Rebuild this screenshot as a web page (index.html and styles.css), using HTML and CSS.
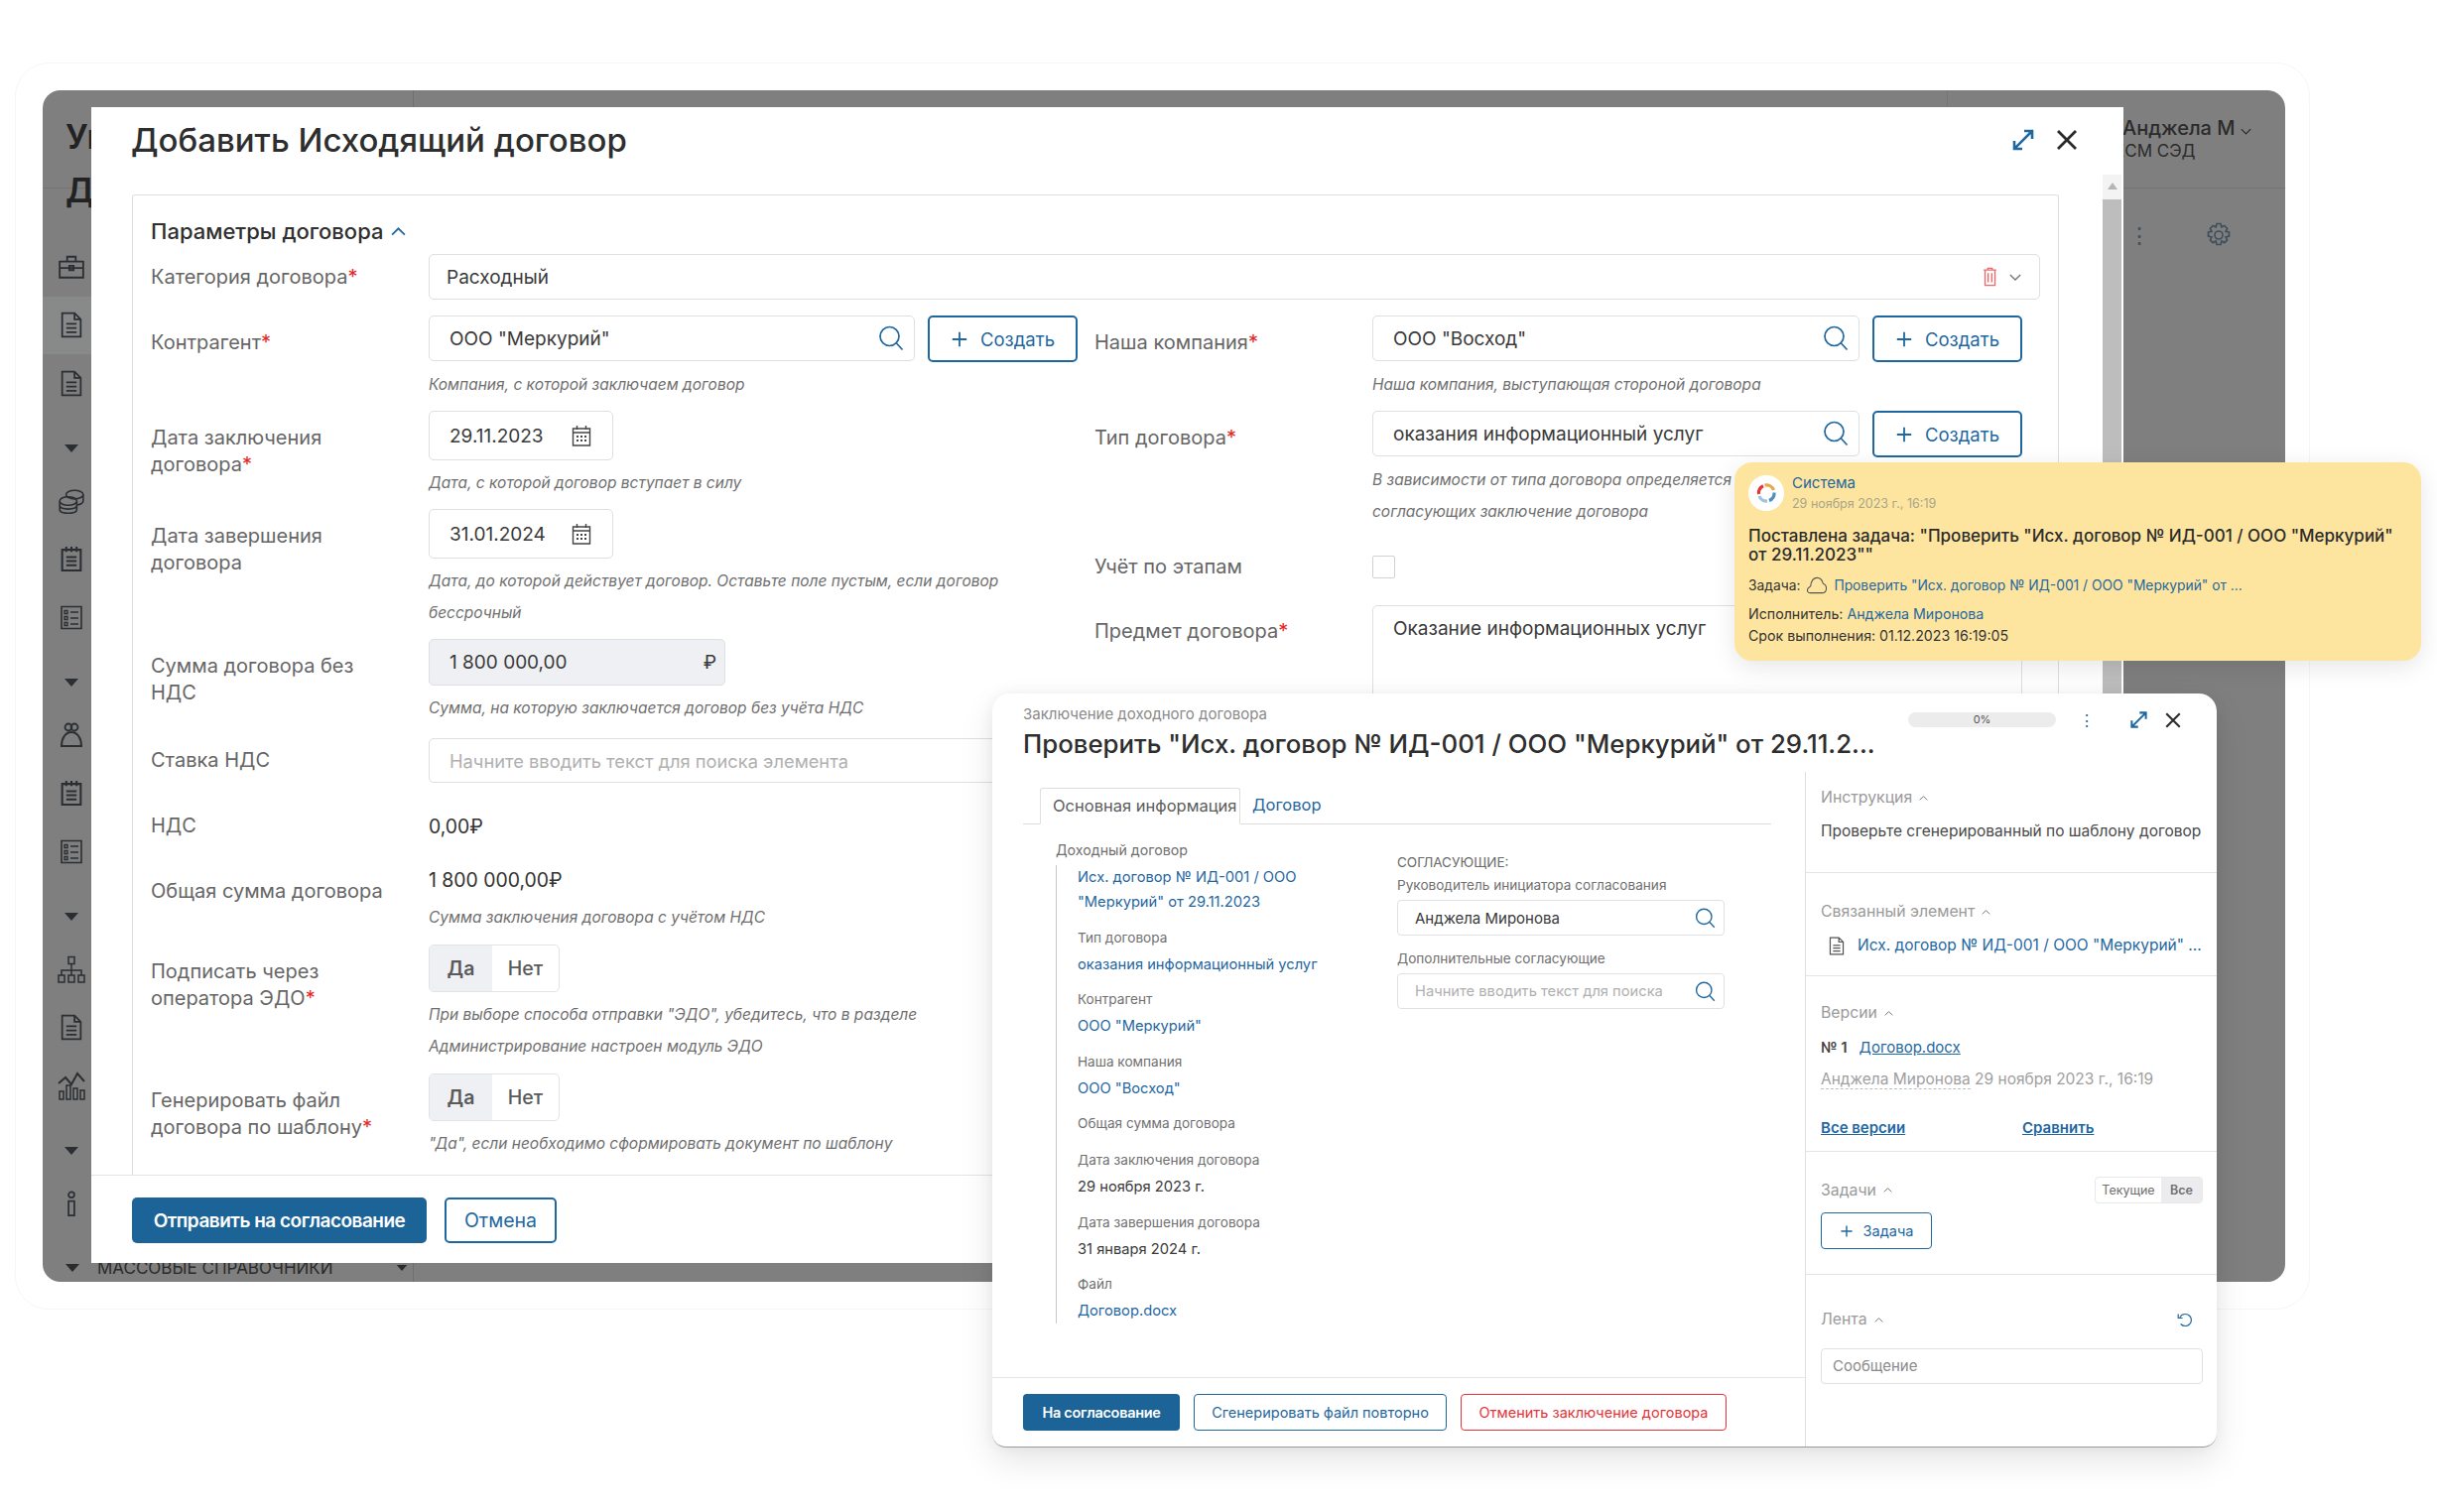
FILE: index.html
```html
<!DOCTYPE html>
<html lang="ru">
<head>
<meta charset="utf-8">
<title>Исходящий договор</title>
<link rel="stylesheet" href="styles.css">
</head>
<body>
<svg class="defs" width="0" height="0">
  <symbol id="i-search" viewBox="0 0 26 26"><circle cx="11.5" cy="11" r="9.5" fill="none" stroke="currentColor" stroke-width="1.7"/><path d="M18.5 18l6 6.5" fill="none" stroke="currentColor" stroke-width="1.7"/></symbol>
  <symbol id="i-plus" viewBox="0 0 20 20"><path d="M10 2v16M2 10h16" fill="none" stroke="currentColor" stroke-width="2"/></symbol>
  <symbol id="i-cal" viewBox="0 0 20 22"><path d="M1.5 4h17v17h-17zM1.5 8h17M5.500 1v4M14.500 1v4" fill="none" stroke="currentColor" stroke-width="1.400"/><path d="M5 11h2v2H5zM9 11h2v2H9zM13 11h2v2h-2zM5 15h2v2H5zM9 15h2v2H9zM13 15h2v2h-2z" fill="currentColor"/></symbol>
  <symbol id="i-expand" viewBox="0 0 24 24"><path d="M3 21L21 3M13 3h8v8M3 13v8h8" fill="none" stroke="currentColor" stroke-width="2.600"/></symbol>
  <symbol id="i-close" viewBox="0 0 24 24"><path d="M3 3l18 18M21 3L3 21" fill="none" stroke="currentColor" stroke-width="2.800"/></symbol>
  <symbol id="i-chev" viewBox="0 0 14 8"><path d="M1 7l6-6 6 6" fill="none" stroke="currentColor" stroke-width="1.600"/></symbol>
  <symbol id="i-down" viewBox="0 0 14 8"><path d="M1 1l6 6 6-6" fill="none" stroke="currentColor" stroke-width="1.600"/></symbol>
  <symbol id="i-arrow" viewBox="0 0 16 10"><path d="M1 1h14L8 9z" fill="currentColor"/></symbol>
  <symbol id="i-doc" viewBox="0 0 22 26"><path d="M2 1.500h12l6 6v17H2zM14 1.500v6h6M6 12h10M6 16h10M6 20h10" fill="none" stroke="currentColor" stroke-width="1.700"/></symbol>
  <symbol id="i-case" viewBox="0 0 26 24"><path d="M2 7h22v15H2zM9 7V2.500h8V7M2 13h22M11 11h4v4h-4z" fill="none" stroke="currentColor" stroke-width="1.700"/></symbol>
  <symbol id="i-coins" viewBox="0 0 26 24"><ellipse cx="16" cy="6" rx="8" ry="4" fill="none" stroke="currentColor" stroke-width="1.500"/><path d="M24 6v6c0 2-3 3.500-6 3.500M2 12c0-2 3-4 8-4s8 2 8 4-3 4-8 4-8-2-8-4zM2 12v8c0 2 3 3.500 8 3.500s8-1.500 8-3.500v-8M2 16c0 2 3 3.500 8 3.500s8-1.500 8-3.500" fill="none" stroke="currentColor" stroke-width="1.500"/></symbol>
  <symbol id="i-note" viewBox="0 0 22 26"><path d="M2 4h18v20H2zM6 1v5M11 1v5M16 1v5M6 11h10M6 15h10M6 19h10" fill="none" stroke="currentColor" stroke-width="2"/></symbol>
  <symbol id="i-list" viewBox="0 0 24 26"><path d="M2 2h20v22H2z" fill="none" stroke="currentColor" stroke-width="1.600"/><path d="M5 6h3v3H5zM5 12h3v3H5zM5 18h3v3H5zM11 7.500h8M11 13.500h8M11 19.500h8" fill="none" stroke="currentColor" stroke-width="1.300"/></symbol>
  <symbol id="i-person" viewBox="0 0 26 26"><circle cx="10" cy="5" r="3.500" fill="none" stroke="currentColor" stroke-width="1.800"/><circle cx="16" cy="5" r="3.500" fill="none" stroke="currentColor" stroke-width="1.800"/><path d="M3 24c0-8 4-14 10-14s10 6 10 14z" fill="none" stroke="currentColor" stroke-width="2"/></symbol>
  <symbol id="i-tree" viewBox="0 0 30 28"><path d="M12 1.500h6v7h-6zM2 20h6v7H2zM12 20h6v7h-6zM22 20h6v7h-6zM15 8.500V20M5 20v-5h20v5" fill="none" stroke="currentColor" stroke-width="1.500"/></symbol>
  <symbol id="i-chart" viewBox="0 0 30 30"><path d="M2 13l7-6 6 7 6-11 7 8" fill="none" stroke="currentColor" stroke-width="2"/><path d="M3 21h4v8H3zM10 15h4v14h-4zM17 18h4v11h-4zM24 20h4v9h-4z" fill="none" stroke="currentColor" stroke-width="1.500"/></symbol>
  <symbol id="i-info" viewBox="0 0 14 28"><circle cx="7" cy="4.500" r="3" fill="none" stroke="currentColor" stroke-width="1.800"/><path d="M4 11h6v15H4z" fill="none" stroke="currentColor" stroke-width="1.800"/></symbol>
  <symbol id="i-trash" viewBox="0 0 16 22"><path d="M5.500 3V1.500h5V3M1 3.500h14M2.500 3.500v17h11v-17M6 7v10M10 7v10" fill="none" stroke="currentColor" stroke-width="1.500"/></symbol>
  <symbol id="i-gear" viewBox="0 0 26 26"><circle cx="13" cy="13" r="4" fill="none" stroke="currentColor" stroke-width="1.700"/><path d="M11 1.500h4l.8 3.300 3-1.300 2.800 2.800-1.500 3 3.400.7v4l-3.400.8 1.500 3-2.800 2.800-3-1.500-.8 3.400h-4l-.8-3.400-3 1.500-2.800-2.800 1.500-3-3.400-.8v-4l3.400-.7-1.500-3 2.800-2.800 3 1.300z" fill="none" stroke="currentColor" stroke-width="1.700"/></symbol>
  <symbol id="i-cloud" viewBox="0 0 24 20"><path d="M6 18.500H4.500C2 18.500 1 16.500 1.500 14.500 2 12.500 4 12 5 11 5.500 6 8 1.500 12.500 1.500 16 1.500 18 4.500 19 8c2.500 1 4 3.500 3.500 6.500-.4 2.500-2 4-4.500 4z" fill="none" stroke="currentColor" stroke-width="1.200"/></symbol>
  <symbol id="i-refresh" viewBox="0 0 20 18"><path d="M3.500 5.500C5 3 7.500 1.500 10.500 1.500c4 0 7.500 3.300 7.500 7.500s-3.500 7.500-7.500 7.500c-2.500 0-4.500-1-6-2.500" fill="none" stroke="currentColor" stroke-width="1.500"/><path d="M1.500 1.500v5h5.500" fill="none" stroke="currentColor" stroke-width="1.500"/></symbol>
  <symbol id="i-logo" viewBox="0 0 24 24"><path d="M4.500 13A8 8 0 0 1 9 4.700" fill="none" stroke="#e5343a" stroke-width="3.200"/><path d="M10.500 4A8 8 0 0 1 19.500 9" fill="none" stroke="#e9a74d" stroke-width="3.200"/><path d="M20 11.500A8 8 0 0 1 15 19.500" fill="none" stroke="#4f8fc4" stroke-width="3.200"/><path d="M13 20A8 8 0 0 1 5 15" fill="none" stroke="#9fc3de" stroke-width="3.200"/></symbol>
</svg>

<main class="stage">
  <div class="frame"></div>

  <section class="app">
    <div class="app-top">
      <div class="app-top-side"></div>
      <div class="app-top-mid">
        <div class="page-title">Уг<br>Дс</div>
      </div>
      <div class="app-user">
        <div class="app-user-name">Анджела М <svg class="ic-10"><use href="#i-down"/></svg></div>
        <div class="app-user-role">ЕСМ СЭД</div>
      </div>
    </div>
    <div class="app-tools">
      <span class="tool-dots">⋮</span>
      <svg class="ic-26"><use href="#i-gear"/></svg>
    </div>
    <nav class="rail">
      <div class="rail-item"><svg class="ic-26"><use href="#i-case"/></svg></div>
      <div class="rail-item rail-active"><svg class="ic-24"><use href="#i-doc"/></svg></div>
      <div class="rail-item"><svg class="ic-24"><use href="#i-doc"/></svg></div>
      <div class="rail-arrow"><svg class="ic-arrow"><use href="#i-arrow"/></svg></div>
      <div class="rail-item"><svg class="ic-26"><use href="#i-coins"/></svg></div>
      <div class="rail-item"><svg class="ic-24"><use href="#i-note"/></svg></div>
      <div class="rail-item"><svg class="ic-24"><use href="#i-list"/></svg></div>
      <div class="rail-arrow"><svg class="ic-arrow"><use href="#i-arrow"/></svg></div>
      <div class="rail-item"><svg class="ic-26"><use href="#i-person"/></svg></div>
      <div class="rail-item"><svg class="ic-24"><use href="#i-note"/></svg></div>
      <div class="rail-item"><svg class="ic-24"><use href="#i-list"/></svg></div>
      <div class="rail-arrow"><svg class="ic-arrow"><use href="#i-arrow"/></svg></div>
      <div class="rail-item"><svg class="ic-30"><use href="#i-tree"/></svg></div>
      <div class="rail-item"><svg class="ic-24"><use href="#i-doc"/></svg></div>
      <div class="rail-item"><svg class="ic-30"><use href="#i-chart"/></svg></div>
      <div class="rail-arrow"><svg class="ic-arrow"><use href="#i-arrow"/></svg></div>
      <div class="rail-item"><svg class="ic-24"><use href="#i-info"/></svg></div>
    </nav>
    <div class="rail-foot">
      <svg class="ic-arrow"><use href="#i-arrow"/></svg>
      <span class="rail-foot-text">МАССОВЫЕ СПРАВОЧНИКИ</span>
      <svg class="ic-arrow-s"><use href="#i-arrow"/></svg>
    </div>
  </section>

  <section class="modal">
    <header class="modal-head">
      <h1 class="modal-title">Добавить Исходящий договор</h1>
      <div class="modal-actions">
        <svg class="ic-expand"><use href="#i-expand"/></svg>
        <svg class="ic-close"><use href="#i-close"/></svg>
      </div>
    </header>
    <div class="modal-body">
      <div class="card">
        <div class="card-title">Параметры договора <svg class="ic-chev"><use href="#i-chev"/></svg></div>
        <div class="field field-cat">
          <label class="label label-cat">Категория договора<em>*</em></label>
          <div class="input">
            <span class="grow">Расходный</span>
            <svg class="ic-trash"><use href="#i-trash"/></svg>
            <svg class="ic-selchev"><use href="#i-down"/></svg>
          </div>
        </div>
        <div class="columns">
          <div class="col">
            <div class="field">
              <label class="label">Контрагент<em>*</em></label>
              <div>
                <div class="input-row">
                  <div class="input input-pad"><span class="grow">ООО "Меркурий"</span><svg class="ic-search"><use href="#i-search"/></svg></div>
                  <button class="btn-add"><svg class="ic-plus"><use href="#i-plus"/></svg>Создать</button>
                </div>
                <p class="hint">Компания, с которой заключаем договор</p>
              </div>
            </div>
            <div class="field">
              <label class="label">Дата заключения договора<em>*</em></label>
              <div>
                <div class="input input-pad input-date"><span class="grow">29.11.2023</span><svg class="ic-cal"><use href="#i-cal"/></svg></div>
                <p class="hint">Дата, с которой договор вступает в силу</p>
              </div>
            </div>
            <div class="field">
              <label class="label">Дата завершения договора</label>
              <div>
                <div class="input input-pad input-date"><span class="grow">31.01.2024</span><svg class="ic-cal"><use href="#i-cal"/></svg></div>
                <p class="hint">Дата, до которой действует договор. Оставьте поле пустым, если договор<br>бессрочный</p>
              </div>
            </div>
            <div class="field">
              <label class="label">Сумма договора без НДС</label>
              <div>
                <div class="input input-pad input-sum"><span class="grow">1 800 000,00</span><span>₽</span></div>
                <p class="hint">Сумма, на которую заключается договор без учёта НДС</p>
              </div>
            </div>
            <div class="field field-rate">
              <label class="label label-rate">Ставка НДС</label>
              <div class="input input-pad input-ph">Начните вводить текст для поиска элемента</div>
            </div>
            <div class="field field-vat">
              <label class="label label-vat">НДС</label>
              <div class="value">0,00₽</div>
            </div>
            <div class="field field-total">
              <label class="label">Общая сумма договора</label>
              <div>
                <div class="value">1 800 000,00₽</div>
                <p class="hint hint-tight">Сумма заключения договора с учётом НДС</p>
              </div>
            </div>
            <div class="field field-toggle">
              <label class="label">Подписать через оператора ЭДО<em>*</em></label>
              <div>
                <div class="toggle"><span class="toggle-on">Да</span><span class="toggle-off">Нет</span></div>
                <p class="hint">При выборе способа отправки "ЭДО", убедитесь, что в разделе<br>Администрирование настроен модуль ЭДО</p>
              </div>
            </div>
            <div class="field field-toggle">
              <label class="label">Генерировать файл договора по шаблону<em>*</em></label>
              <div>
                <div class="toggle"><span class="toggle-on">Да</span><span class="toggle-off">Нет</span></div>
                <p class="hint">"Да", если необходимо сформировать документ по шаблону</p>
              </div>
            </div>
          </div>
          <div class="col">
            <div class="field">
              <label class="label">Наша компания<em>*</em></label>
              <div>
                <div class="input-row">
                  <div class="input input-pad"><span class="grow">ООО "Восход"</span><svg class="ic-search"><use href="#i-search"/></svg></div>
                  <button class="btn-add"><svg class="ic-plus"><use href="#i-plus"/></svg>Создать</button>
                </div>
                <p class="hint">Наша компания, выступающая стороной договора</p>
              </div>
            </div>
            <div class="field">
              <label class="label">Тип договора<em>*</em></label>
              <div>
                <div class="input-row">
                  <div class="input input-pad"><span class="grow">оказания информационный услуг</span><svg class="ic-search"><use href="#i-search"/></svg></div>
                  <button class="btn-add"><svg class="ic-plus"><use href="#i-plus"/></svg>Создать</button>
                </div>
                <p class="hint">В зависимости от типа договора определяется состав<br>согласующих заключение договора</p>
              </div>
            </div>
            <div class="field field-check">
              <label class="label">Учёт по этапам</label>
              <div><div class="checkbox"></div></div>
            </div>
            <div class="field">
              <label class="label label-subject">Предмет договора<em>*</em></label>
              <div class="textarea">Оказание информационных услуг</div>
            </div>
          </div>
        </div>
      </div>
    </div>
    <footer class="modal-foot">
      <button class="btn-primary">Отправить на согласование</button>
      <button class="btn-outline">Отмена</button>
    </footer>
    <div class="scrollbar"><span class="scroll-up"></span><span class="scroll-thumb"></span></div>
  </section>

  <section class="task">
    <header class="task-head">
      <div class="task-head-main">
        <div class="task-crumb">Заключение доходного договора</div>
        <h2 class="task-title">Проверить "Исх. договор № ИД-001 / ООО "Меркурий" от 29.11.2...</h2>
      </div>
      <div class="task-tools">
        <div class="progress">0%</div>
        <span class="task-dots">⋮</span>
        <svg class="ic-expand-s"><use href="#i-expand"/></svg>
        <svg class="ic-close-s"><use href="#i-close"/></svg>
      </div>
    </header>
    <div class="task-body">
      <div class="task-main">
        <div class="tabs">
          <span class="tab tab-active">Основная информация</span>
          <span class="tab tab-link">Договор</span>
        </div>
        <div class="task-content">
          <div class="info">
            <div class="info-head">Доходный договор</div>
            <div class="info-list">
              <div class="info-item"><a class="link">Исх. договор № ИД-001 / ООО<br>"Меркурий" от 29.11.2023</a></div>
              <div class="info-item"><div class="info-label">Тип договора</div><a class="link info-val">оказания информационный услуг</a></div>
              <div class="info-item"><div class="info-label">Контрагент</div><a class="link info-val">ООО "Меркурий"</a></div>
              <div class="info-item"><div class="info-label">Наша компания</div><a class="link info-val">ООО "Восход"</a></div>
              <div class="info-item info-empty"><div class="info-label">Общая сумма договора</div></div>
              <div class="info-item"><div class="info-label">Дата заключения договора</div><div class="info-val">29 ноября 2023 г.</div></div>
              <div class="info-item"><div class="info-label">Дата завершения договора</div><div class="info-val">31 января 2024 г.</div></div>
              <div class="info-item info-last"><div class="info-label">Файл</div><a class="link info-val">Договор.docx</a></div>
            </div>
          </div>
          <div class="approvers">
            <div class="appr-head">СОГЛАСУЮЩИЕ:</div>
            <div class="info-label">Руководитель инициатора согласования</div>
            <div class="mini-input"><span class="grow">Анджела Миронова</span><svg class="ic-search-s"><use href="#i-search"/></svg></div>
            <div class="info-label appr-label">Дополнительные согласующие</div>
            <div class="mini-input mini-ph"><span class="grow">Начните вводить текст для поиска</span><svg class="ic-search-s"><use href="#i-search"/></svg></div>
          </div>
        </div>
        <footer class="task-foot">
          <button class="tbtn tbtn-primary">На согласование</button>
          <button class="tbtn tbtn-outline">Сгенерировать файл повторно</button>
          <button class="tbtn tbtn-danger">Отменить заключение договора</button>
        </footer>
      </div>
      <aside class="task-side">
        <div class="side-sec sec-instr">
          <div class="side-title">Инструкция <svg class="ic-chev-s"><use href="#i-chev"/></svg></div>
          <p class="side-text">Проверьте сгенерированный по шаблону договор</p>
        </div>
        <div class="side-sec sec-link">
          <div class="side-title">Связанный элемент <svg class="ic-chev-s"><use href="#i-chev"/></svg></div>
          <div class="side-linked"><svg class="ic-doc-s"><use href="#i-doc"/></svg><a class="link">Исх. договор № ИД-001 / ООО "Меркурий" ...</a></div>
        </div>
        <div class="side-sec sec-ver">
          <div class="side-title">Версии <svg class="ic-chev-s"><use href="#i-chev"/></svg></div>
          <div class="ver-row"><b class="ver-num">№ 1</b><a class="link link-u">Договор.docx</a></div>
          <div class="ver-meta"><span class="ver-author">Анджела Миронова</span> 29 ноября 2023 г., 16:19</div>
          <div class="ver-links"><a class="link link-u link-b ver-all">Все версии</a><a class="link link-u link-b">Сравнить</a></div>
        </div>
        <div class="side-sec sec-tasks">
          <div class="side-row">
            <div class="side-title">Задачи <svg class="ic-chev-s"><use href="#i-chev"/></svg></div>
            <div class="mini-toggle"><span class="mt-off">Текущие</span><span class="mt-on">Все</span></div>
          </div>
          <button class="btn-task"><svg class="ic-plus-s"><use href="#i-plus"/></svg>Задача</button>
        </div>
        <div class="side-sec sec-feed">
          <div class="side-row side-row-feed">
            <div class="side-title">Лента <svg class="ic-chev-s"><use href="#i-chev"/></svg></div>
            <svg class="ic-refresh"><use href="#i-refresh"/></svg>
          </div>
          <div class="feed-input">Сообщение</div>
        </div>
      </aside>
    </div>
  </section>

  <aside class="toast">
    <div class="toast-head">
      <div class="toast-avatar"><svg class="ic-logo"><use href="#i-logo"/></svg></div>
      <div>
        <a class="link toast-from">Система</a>
        <div class="toast-date">29 ноября 2023 г., 16:19</div>
      </div>
    </div>
    <div class="toast-title">Поставлена задача: "Проверить "Исх. договор № ИД-001 / ООО "Меркурий" от 29.11.2023""</div>
    <div class="toast-line toast-task">Задача: <svg class="ic-cloud"><use href="#i-cloud"/></svg> <a class="link">Проверить "Исх. договор № ИД-001 / ООО "Меркурий" от ...</a></div>
    <div class="toast-line toast-exec">Исполнитель: <a class="link">Анджела Миронова</a></div>
    <div class="toast-line toast-due">Срок выполнения: 01.12.2023 16:19:05</div>
  </aside>
</main>
</body>
</html>
```

FILE: styles.css
```css
* { box-sizing: border-box; }
html, body { margin: 0; padding: 0; background: #fff; }
body { font-family: Inter, "Noto Sans", sans-serif; color: #2f2f2f; }
.defs { position: absolute; }
svg { flex: none; }
p, h1, h2 { margin: 0; font-weight: 500; }
p { font-weight: 400; }
em { color: #e32626; font-style: normal; }
button { font-family: inherit; cursor: pointer; }
.grow { flex: 1; min-width: 0; white-space: nowrap; overflow: hidden; }
.link { color: #1f679f; text-decoration: none; }
.link-u { text-decoration: underline; }
.link-b { font-weight: 600; }

.stage { position: relative; width: 2456px; height: 1524px; overflow: hidden; }
.frame { position: absolute; left: 15px; top: 63px; width: 2313px; height: 1257px; border: 1.5px solid #f6f6f6; border-radius: 34px; }

/* background application */
.app { position: absolute; left: 43px; top: 91px; width: 2260px; height: 1201px; background: #7f7f7f; border-radius: 18px; overflow: hidden; color: #2b2b2b; }
.app-top { display: flex; height: 99px; border-bottom: 1.5px solid #737373; }
.app-top-side { width: 374px; border-right: 1.5px solid #707070; height: 18px; }
.app-top-mid { flex: 1; border-right: 1.5px solid #757575; height: 18px; }
.page-title { position: absolute; left: 23px; top: 20px; font-size: 34px; line-height: 54px; font-weight: 600; color: #222; }
.app-user { width: 340px; padding: 26px 0 0 176px; }
.app-user-name { font-size: 20px; font-weight: 500; white-space: nowrap; line-height: 24px; }
.app-user-role { font-size: 17px; line-height: 22px; white-space: nowrap; margin-left: -8px; }
.app-tools { position: absolute; left: 2102px; top: 133px; display: flex; align-items: center; gap: 55px; color: #3f4f5c; }
.tool-dots { font-size: 22px; line-height: 26px; }
.rail { position: absolute; left: 0; top: 149px; width: 58px; display: flex; flex-direction: column; }
.rail-item { height: 58.500px; display: flex; align-items: center; justify-content: center; color: #2b2f33; flex: none; }
.rail-active { background: #888a8a; }
.rail-arrow { height: 60.500px; padding-top: 12px; display: flex; align-items: center; justify-content: center; color: #2b2f33; flex: none; }
.rail-foot { position: absolute; left: 0; bottom: 0; width: 374px; height: 28px; display: flex; align-items: center; gap: 17px; padding-left: 22px; border-right: 1.5px solid #707070; color: #2b2b2b; font-size: 17px; }
.rail-foot-text { flex: 1; white-space: nowrap; }
.ic-10 { width: 11px; height: 7px; }
.ic-24 { width: 24px; height: 27px; }
.ic-26 { width: 28px; height: 26px; }
.ic-30 { width: 30px; height: 30px; }
.ic-arrow { width: 16px; height: 10px; }
.ic-arrow-s { width: 12px; height: 8px; margin-right: 5px; }

/* main modal */
.modal { position: absolute; left: 92px; top: 108px; width: 2048px; height: 1165px; background: #fff; display: flex; flex-direction: column; overflow: hidden; }
.modal-head { height: 88px; display: flex; align-items: flex-start; justify-content: space-between; padding: 12px 45px 0 40px; flex: none; }
.modal-title { font-size: 33px; line-height: 42px; font-weight: 500; color: #2e2e2e; white-space: nowrap; }
.modal-actions { display: flex; align-items: center; gap: 20px; height: 42px; }
.ic-expand { width: 24px; height: 24px; color: #1f679f; }
.ic-close { width: 24px; height: 24px; color: #2a2a2a; }
.modal-body { flex: 1; min-height: 0; padding-left: 41px; overflow: hidden; }
.card { width: 1942px; height: 100%; border: 1.5px solid #dedede; border-bottom: 0; padding: 21px 18px 0 18px; border-radius: 3px 3px 0 0; overflow: hidden; }
.card-title { font-size: 22px; line-height: 30px; font-weight: 500; color: #2f2f2f; margin-bottom: 8px; display: flex; align-items: center; gap: 8px; white-space: nowrap; }
.ic-chev { width: 15px; height: 9px; color: #1f679f; }
.field { display: grid; grid-template-columns: 280px 1fr; }
.field-cat { margin-bottom: 16px; }
.label { font-size: 20px; line-height: 27px; color: #666; padding: 14px 40px 0 0; display: block; }
.label-cat { padding-top: 10px; padding-right: 0; }
.label-rate { padding-top: 9px; }
.label-vat { padding-top: 2px; }
.label-subject { padding-top: 14px; }
.columns { display: grid; grid-template-columns: 934px 935px; column-gap: 17px; }
.col { display: flex; flex-direction: column; gap: 10px; }
.input { height: 46px; border: 1.5px solid #dcdfe3; border-radius: 5px; background: #fff; display: flex; align-items: center; padding: 0 17px 0 17px; font-size: 19px; color: #3a3a3a; }
.input-pad { padding: 0 10px 0 20px; flex: 1; min-width: 0; }
.input-row { display: flex; gap: 13px; }
.input-date { width: 186px; height: 50px; padding-right: 21px; flex: none; }
.input-sum { width: 299px; height: 47px; background: #eef0f4; flex: none; padding-right: 8px; }
.input-ph { color: #b0b0b0; font-size: 18.300px; white-space: nowrap; overflow: hidden; height: 45px; }
.ic-search { width: 26px; height: 26px; color: #1f679f; }
.ic-cal { width: 20px; height: 22px; color: #444; }
.ic-trash { width: 15px; height: 20px; color: #ec6a6e; margin-right: 12px; }
.ic-selchev { width: 12px; height: 7px; color: #777; margin-right: 1px; }
.btn-add { width: 151px; height: 47px; flex: none; background: #fff; border: 2px solid #1f679f; border-radius: 5px; color: #1f679f; font-size: 18.500px; display: flex; align-items: center; justify-content: center; gap: 12px; padding: 0; }
.ic-plus { width: 18px; height: 18px; }
.hint { font-size: 15.500px; line-height: 32px; font-style: italic; color: #6f6f6f; margin-top: 7px; white-space: nowrap; }
.hint-tight { margin-top: 6px; }
.field-rate { margin-top: 4px; }
.field-vat { margin-top: 18px; }
.field-total { margin-top: 12px; }
.field-toggle { margin-top: 1px; }
.value { font-size: 19.400px; line-height: 32px; color: #333; }
.toggle { display: flex; width: 132px; height: 48px; border: 1.5px solid #e1e3e7; border-radius: 5px; overflow: hidden; font-size: 19.500px; }
.toggle-on { width: 63px; background: #eef0f4; display: flex; align-items: center; justify-content: center; font-weight: 600; color: #5a5a5a; }
.toggle-off { flex: 1; display: flex; align-items: center; justify-content: center; color: #5a5a5a; font-weight: 500; }
.field-check { min-height: 55px; margin-top: 2px; }
.checkbox { width: 23px; height: 23px; border: 1.5px solid #cfd2d6; margin-top: 16px; border-radius: 2px; }
.textarea { height: 300px; border: 1.5px solid #dcdfe3; border-radius: 5px; padding: 7px 20px; font-size: 19px; line-height: 32px; color: #3a3a3a; margin-top: 1px; }
.modal-foot { flex: none; height: 89px; border-top: 1.5px solid #e4e4e4; padding: 22px 41px 0; display: flex; gap: 18px; align-items: flex-start; background: #fff; position: relative; }
.btn-primary { width: 297px; height: 46px; border: 0; border-radius: 5px; background: #1c6397; color: #fff; font-size: 19px; font-weight: 600; letter-spacing: -0.5px; padding: 0; }
.btn-outline { width: 113px; height: 46px; background: #fff; border: 2px solid #1f679f; border-radius: 5px; color: #1f679f; font-size: 19.500px; padding: 0; }
.scrollbar { position: absolute; left: 2027px; top: 68px; width: 19px; height: 1100px; background: #f3f3f3; display: flex; flex-direction: column; align-items: stretch; }
.scroll-up { height: 25px; position: relative; }
.scroll-up::before { content: ""; position: absolute; left: 5px; top: 8px; border: 5px solid transparent; border-bottom: 7px solid #b5b5b5; border-top: 0; }
.scroll-thumb { flex: 1; background: #bdbdbd; }

/* toast */
.toast { position: absolute; left: 1748px; top: 466px; width: 692px; height: 200px; background: #fee59f; border-radius: 18px; box-shadow: 0 6px 24px rgba(0,0,0,.10); padding: 13px 14px; color: #333; }
.toast-head { display: flex; gap: 8px; height: 40px; }
.toast-avatar { width: 36px; height: 36px; border-radius: 50%; background: #fff; display: flex; align-items: center; justify-content: center; }
.ic-logo { width: 24px; height: 24px; }
.toast-from { display: block; font-size: 15px; line-height: 20px; margin-top: -2px; }
.toast-date { font-size: 12.500px; line-height: 20px; color: #a8a688; margin-top: 1px; }
.toast-title { font-size: 17px; line-height: 19px; font-weight: 500; color: #2c2c2c; margin-top: 12px; }
.toast-line { font-size: 14.200px; line-height: 22px; white-space: nowrap; color: #333; }
.toast-task { margin-top: 10px; display: flex; align-items: center; gap: 6px; font-size: 13.800px; }
.toast-exec { margin-top: 7px; }
.ic-cloud { width: 22px; height: 18px; color: #555; }

/* task window */
.task { position: absolute; left: 1000px; top: 699px; width: 1234px; height: 760px; background: #fff; border-radius: 18px 18px 14px 14px; border-bottom: 1.5px solid #9a9a9a; box-shadow: 0 14px 34px rgba(0,0,0,.10), 0 0 14px rgba(0,0,0,.05); display: flex; flex-direction: column; overflow: hidden; }
.task-head { height: 79px; flex: none; display: flex; padding-left: 31px; position: relative; }
.task-head-main { flex: 1; min-width: 0; }
.task-crumb { font-size: 15px; line-height: 20px; color: #8a8a8a; margin-top: 11px; white-space: nowrap; }
.task-title { font-size: 25.800px; line-height: 40px; font-weight: 500; color: #2e2e2e; white-space: nowrap; }
.task-tools { width: 311px; flex: none; display: flex; align-items: center; height: 15px; margin-top: 19px; }
.progress { width: 149px; height: 15px; border-radius: 8px; background: #ececec; font-size: 11px; line-height: 15px; text-align: center; color: #555; }
.task-dots { color: #1f679f; font-size: 16px; width: 10px; text-align: center; margin-left: 23px; }
.ic-expand-s { width: 19px; height: 19px; color: #1f679f; margin-left: 41px; }
.ic-close-s { width: 18px; height: 18px; color: #2a2a2a; margin-left: 16px; }
.task-body { flex: 1; min-height: 0; display: flex; }
.task-main { width: 819px; flex: none; display: flex; flex-direction: column; }
.tabs { margin: 16px 34px 0 31px; height: 37px; border-bottom: 1.5px solid #dedede; display: flex; padding-left: 17px; flex: none; }
.tab { height: 37px; font-size: 16.500px; line-height: 35px; padding: 0 12px; white-space: nowrap; }
.tab-active { border: 1.5px solid #dedede; border-bottom: 1.5px solid #fff; color: #5c5c5c; width: 202px; border-radius: 3px 3px 0 0; background: #fff; }
.tab-link { color: #1f679f; }
.task-content { flex: 1; min-height: 0; display: flex; padding: 16px 0 0 64px; }
.info { width: 344px; flex: none; }
.info-head { font-size: 14.200px; line-height: 20px; color: #707070; margin-bottom: 5px; }
.info-list { border-left: 1.5px solid #c9c9c9; padding-left: 21px; }
.info-item { margin-bottom: 12.500px; font-size: 14.700px; line-height: 25px; white-space: nowrap; color: #3a3a3a; }
.info-empty { margin-bottom: 17px; }
.info-last { margin-bottom: 0; }
.info-label { font-size: 13.600px; line-height: 20px; color: #707070; white-space: nowrap; }
.info-val { display: block; margin-top: 5px; }
.approvers { width: 330px; padding-top: 12px; }
.appr-head { font-size: 13.500px; line-height: 20px; color: #6a6a6a; margin-bottom: 3px; }
.appr-label { margin-top: 13px; }
.mini-input { height: 36px; margin-top: 5px; border: 1.5px solid #dfe1e5; border-radius: 4px; display: flex; align-items: center; padding: 0 8px 0 17px; font-size: 15px; color: #3a3a3a; }
.mini-ph { color: #b0b0b0; font-size: 14.700px; }
.ic-search-s { width: 21px; height: 21px; color: #1f679f; }
.task-foot { flex: none; height: 70px; border-top: 1.5px solid #e6e6e6; padding: 16px 0 0 31px; display: flex; gap: 14px; align-items: flex-start; }
.tbtn { height: 37px; border-radius: 4px; font-size: 14.500px; padding: 0; white-space: nowrap; }
.tbtn-primary { width: 158px; background: #1c6397; border: 0; color: #fff; font-weight: 600; letter-spacing: -0.3px; }
.tbtn-outline { width: 255px; background: #fff; border: 1.5px solid #1f679f; color: #1f679f; }
.tbtn-danger { width: 268px; background: #fff; border: 1.5px solid #e8333a; color: #e8333a; }
.task-side { flex: 1; min-width: 0; border-left: 1.5px solid #e0e0e0; }
.side-sec { padding-left: 15px; padding-right: 14px; border-bottom: 1.5px solid #e4e4e4; }
.sec-instr { padding-top: 16px; padding-bottom: 29px; }
.sec-link { padding-top: 29px; padding-bottom: 18px; }
.sec-ver { padding-top: 27px; padding-bottom: 11px; }
.sec-tasks { padding-top: 25px; padding-bottom: 25px; }
.sec-feed { padding-top: 35px; border-bottom: 0; }
.side-title { font-size: 15.800px; line-height: 20px; color: #9a9a9a; display: flex; align-items: center; gap: 7px; white-space: nowrap; }
.ic-chev-s { width: 9px; height: 5px; color: #777; }
.side-text { font-size: 15.500px; line-height: 24px; color: #4a4a4a; margin-top: 12px; white-space: nowrap; }
.side-linked { display: flex; align-items: center; gap: 13px; margin-top: 12px; padding-left: 8px; font-size: 15.500px; line-height: 24px; white-space: nowrap; height: 24px; }
.ic-doc-s { width: 16px; height: 19px; color: #555; }
.ver-row { display: flex; gap: 12px; margin-top: 13px; font-size: 15px; line-height: 24px; }
.ver-num { color: #444; font-weight: 600; }
.ver-meta { margin-top: 8px; font-size: 15.500px; line-height: 24px; color: #a0a0a0; white-space: nowrap; }
.ver-author { border-bottom: 1px dashed #bdbdbd; }
.ver-links { display: flex; margin-top: 25px; font-size: 15px; line-height: 24px; }
.ver-all { width: 203px; }
.side-row { display: flex; align-items: center; justify-content: space-between; height: 27px; }
.side-row-feed { height: 20px; padding-right: 10px; }
.mini-toggle { display: flex; width: 109px; height: 27px; border: 1px solid #e8e8e8; border-radius: 4px; overflow: hidden; font-size: 12.500px; line-height: 25px; color: #707070; }
.mt-off { flex: 1; text-align: center; white-space: nowrap; }
.mt-on { width: 41px; background: #ececef; text-align: center; font-weight: 600; }
.btn-task { display: flex; align-items: center; justify-content: center; gap: 10px; margin-top: 9px; width: 112px; height: 37px; background: #fff; border: 1.5px solid #1f679f; border-radius: 4px; color: #1f679f; font-size: 14.500px; padding: 0; }
.ic-plus-s { width: 14px; height: 14px; }
.ic-refresh { width: 16px; height: 15px; color: #1f679f; }
.feed-input { height: 36px; margin-top: 19px; border: 1.5px solid #dfe1e5; border-radius: 4px; padding: 0 11px; font-size: 15px; line-height: 33px; color: #8a8a8a; }
```
